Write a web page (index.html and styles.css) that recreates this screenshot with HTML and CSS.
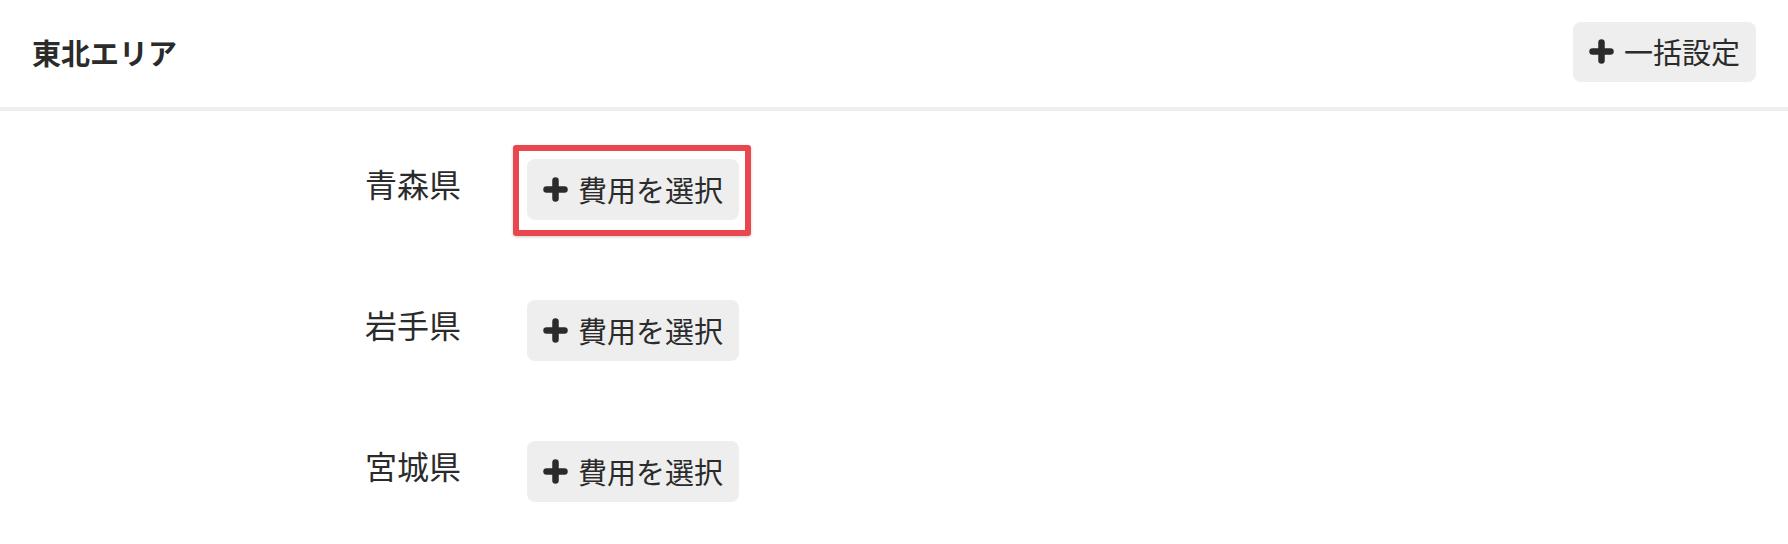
FILE: index.html
```html
<!DOCTYPE html>
<html lang="ja">
<head>
  <meta charset="UTF-8">
  <meta name="viewport" content="width=device-width, initial-scale=1.0">
  <title>東北エリア</title>
  <link rel="stylesheet" href="styles.css">
</head>
<body>

<div class="area">
  <div class="area-header">
    <h2>東北エリア</h2>
    <!-- 一括設定ボタン -->
    <button type="button" class="btn">
      <svg class="plus" viewBox="0 0 25 25"><path d="M12.5 3.5v18M3.5 12.5h18"/></svg>
      <span>一括設定</span>
    </button>
  </div>

  <div class="pref-list">
    <div class="pref-row">
      <div class="pref-name">青森県</div>
      <button type="button" class="btn selected">
        <svg class="plus" viewBox="0 0 25 25"><path d="M12.5 3.5v18M3.5 12.5h18"/></svg>
        <span>費用を選択</span>
      </button>
    </div>

    <div class="pref-row">
      <div class="pref-name">岩手県</div>
      <button type="button" class="btn">
        <svg class="plus" viewBox="0 0 25 25"><path d="M12.5 3.5v18M3.5 12.5h18"/></svg>
        <span>費用を選択</span>
      </button>
    </div>

    <div class="pref-row">
      <div class="pref-name">宮城県</div>
      <button type="button" class="btn">
        <svg class="plus" viewBox="0 0 25 25"><path d="M12.5 3.5v18M3.5 12.5h18"/></svg>
        <span>費用を選択</span>
      </button>
    </div>
  </div>
</div>

</body>
</html>
```

FILE: styles.css
```css
body {
  font-family: "Noto Sans CJK JP", "Noto Sans", sans-serif;
  background-color: #fff;
  color: #2b2b2b;
  margin: 0;
  padding: 0;
}

.area-header {
  display: flex;
  align-items: center;
  justify-content: space-between;
  height: 103px;
  padding: 0 32px 4px;
  border-bottom: 4px solid #eeeeee;
}

.area-header h2 {
  margin: 0;
  font-size: 29px;
  font-weight: bold;
}

.btn {
  display: flex;
  align-items: center;
  gap: 10px;
  height: 61px;
  padding: 0 16px;
  border: none;
  border-radius: 8px;
  background-color: #eeeeee;
  color: #2b2b2b;
  font-family: inherit;
  font-size: 29px;
  line-height: 1;
  cursor: pointer;
}

.area-header .btn {
  height: 60px;
}

.btn .plus {
  width: 25px;
  height: 25px;
  flex-shrink: 0;
}

.btn .plus path {
  fill: none;
  stroke: #2b2b2b;
  stroke-width: 6.5;
  stroke-linecap: round;
}

.pref-list {
  display: flex;
  flex-direction: column;
  gap: 80px;
  padding: 48px 0 0 365px;
}

.pref-row {
  display: flex;
  align-items: flex-start;
}

.pref-name {
  width: 162px;
  font-size: 32px;
  line-height: 40px;
  margin-top: 4px;
}

.btn.selected {
  position: relative;
}

/* 選択中の枠 */
.btn.selected::after {
  content: "";
  position: absolute;
  top: -14px;
  left: -14px;
  right: -12px;
  bottom: -16px;
  border: 6px solid #e8484d;
  border-radius: 3px;
  box-shadow: 0 1px 3px rgba(0, 0, 0, 0.2);
}
```
